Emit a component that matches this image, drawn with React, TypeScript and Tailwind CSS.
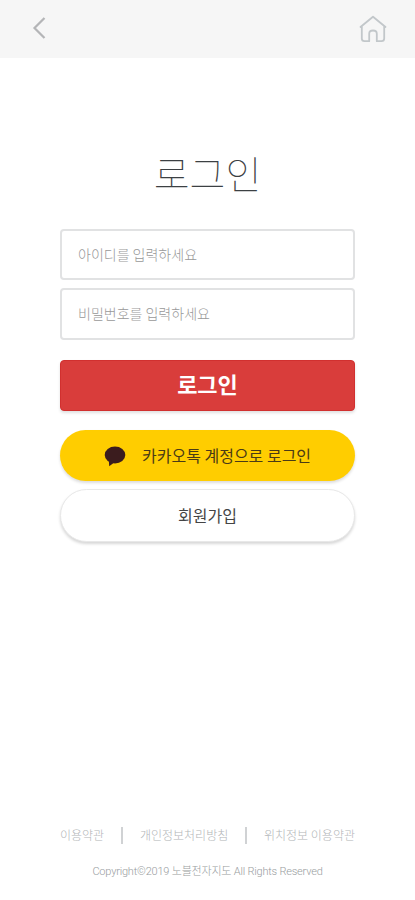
function BackIcon() {
  return (
    <svg width="14" height="24" viewBox="0 0 14 24" fill="none" stroke="#b4b5b7" strokeWidth="2.2">
      <path d="M12.5 2 L2.5 12 L12.5 22" />
    </svg>
  );
}

function HomeIcon() {
  return (
    <svg width="28" height="28" viewBox="0 0 28 28" fill="none" stroke="#c2c7ca" strokeWidth="1.8" strokeLinecap="round" strokeLinejoin="round">
      <path d="M1.500 12 L14 1.800 L26.500 12" />
      <path d="M2.800 12 V23.500 Q2.800 26.200 5.500 26.200 H10.200 V18.800 Q10.200 15.500 14 15.500 Q17.800 15.500 17.800 18.800 V26.200 H22.500 Q25.200 26.200 25.200 23.500 V12" />
    </svg>
  );
}

function TalkIcon() {
  return (
    <svg width="22" height="22" viewBox="0 0 22 22" fill="#3b1c1e">
      <ellipse cx="11" cy="10" rx="10.300" ry="8.400" />
      <path d="M4.800 15 L5.200 21.200 L11 17 Z" />
    </svg>
  );
}

export default function App() {
  return (
    <div className="flex h-[900px] w-full flex-col bg-white font-['Noto_Sans_CJK_KR','Noto_Sans',sans-serif]">
      <header className="flex h-[58px] shrink-0 items-center justify-between bg-[#f6f6f6] pr-[28px] pl-[32px]">
        <button type="button" className="pb-[3px]"><BackIcon /></button>
        <button type="button" className="pb-px"><HomeIcon /></button>
      </header>
      <main className="flex flex-1 flex-col px-[60px]">
        <h1 className="mt-[84px] h-[60px] text-center text-[39px] leading-[60px] font-thin text-[#3c4043]">로그인</h1>
        <form className="mt-[27px] flex flex-col">
          <input type="text" placeholder="아이디를 입력하세요" className="h-[51px] w-full rounded-[4px] border-2 border-[#e1e2e3] px-4 pb-px text-[14px] font-light placeholder:text-[#999]" />
          <input type="password" placeholder="비밀번호를 입력하세요" className="mt-2 h-[52px] w-full rounded-[4px] border-2 border-[#e1e2e3] px-4 pb-[3px] text-[14px] font-light placeholder:text-[#999]" />
          <button type="button" className="mt-5 h-[51px] rounded-[4px] border border-[#d1302f] bg-[#d93d3b] pb-[5px] text-[22px] leading-[44px] font-bold text-white shadow-[0_2px_3px_rgba(0,0,0,0.12)]">로그인</button>
        </form>
        <button type="button" className="mt-[19px] flex h-[51px] shrink-0 items-center rounded-full bg-[#ffcd00] pl-11 text-[16px] text-[#4a3a16] shadow-[0_2px_3px_rgba(0,0,0,0.14)]">
          <TalkIcon />
          <span className="ml-4 pb-[2px] font-normal">카카오톡 계정으로 로그인</span>
        </button>
        <button type="button" className="mt-2 h-[53px] shrink-0 rounded-full border border-[#e8e8e8] bg-white pb-px text-[16px] text-[#444] shadow-[0_2px_3px_rgba(0,0,0,0.16)]">회원가입</button>
        <footer className="mt-auto flex flex-col pb-[18px]">
          <nav className="flex h-5 items-center justify-between text-[12px] leading-5 font-light whitespace-nowrap text-[#b2b5b7]">
            <span>이용약관</span>
            <span className="h-[17px] w-[1.5px] bg-[#d0d2d4]" />
            <span>개인정보처리방침</span>
            <span className="h-[17px] w-[1.5px] bg-[#d0d2d4]" />
            <span>위치정보 이용약관</span>
          </nav>
          <p className="mt-[17px] text-center font-[Roboto,'Noto_Sans_CJK_KR',sans-serif] text-[11px] leading-5 font-light tracking-[-0.2px] whitespace-nowrap text-[#989ca0]">Copyright©2019 노블전자지도 All Rights Reserved</p>
        </footer>
      </main>
    </div>
  );
}
